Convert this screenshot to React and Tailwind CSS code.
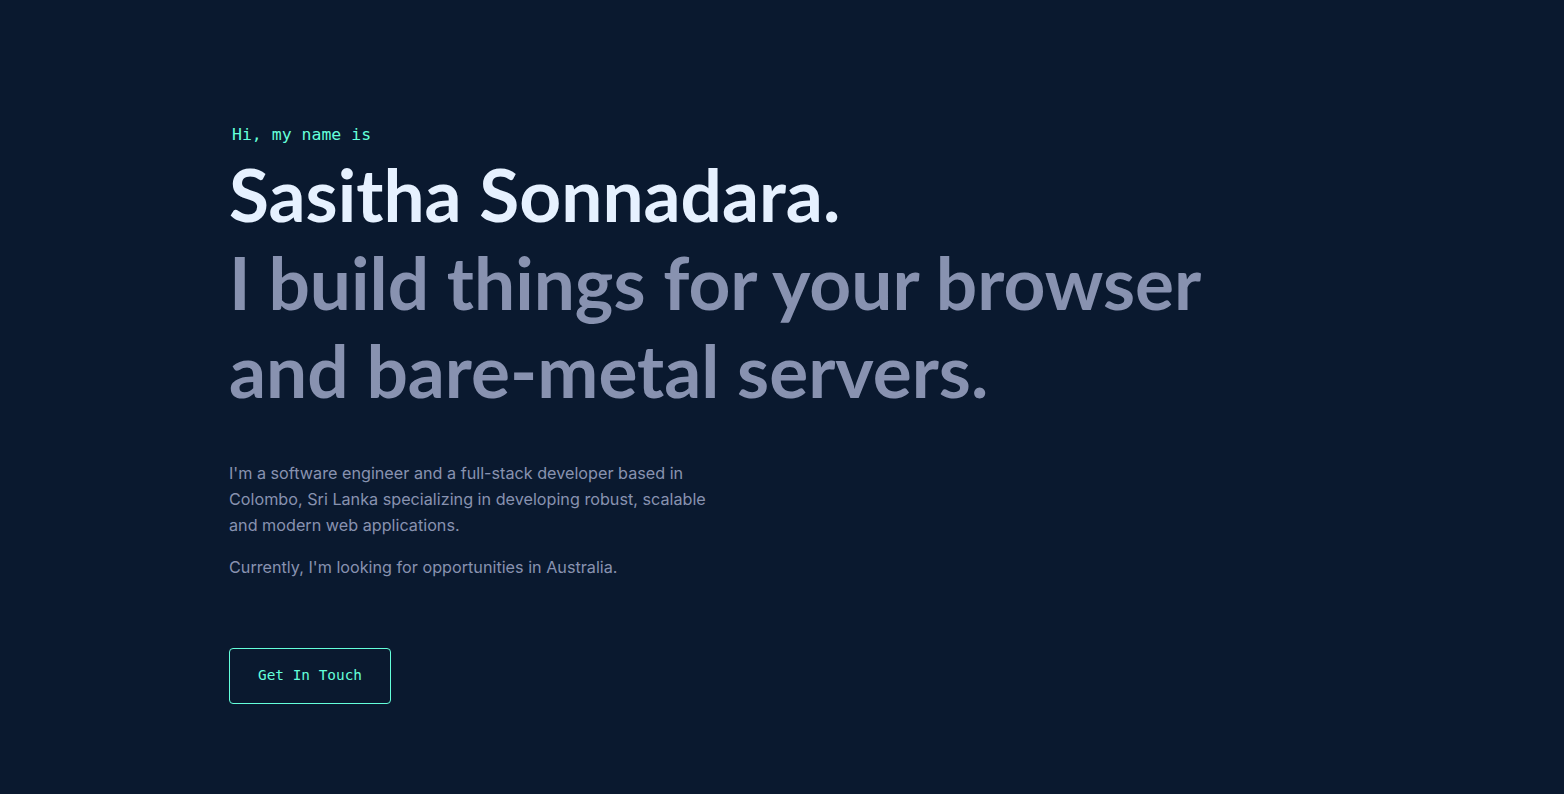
export default function App() {
  return (
    <div className="min-h-screen bg-[#0a192f]">
      <section className="mx-auto flex max-w-[1106px] flex-col items-start pt-[123px] pb-[90px]">
        <h1 className="ml-[3px] font-['DejaVu_Sans_Mono',monospace] text-[16.5px] leading-[24px] text-[#64ffda]">
          Hi, my name is
        </h1>
        <h2 className="mt-[3px] font-['Lato',sans-serif] text-[73px] font-bold leading-[88px] text-[#e6f1ff]">
          Sasitha Sonnadara.
        </h2>
        <h3 className="font-['Lato',sans-serif] text-[73px] font-bold leading-[88px] text-[#8892b0]">
          I build things for your browser
          <br />
          and bare-metal servers.
        </h3>
        <div className="mt-[46px] max-w-[490px] font-['Inter',sans-serif] text-[16.2px] leading-[26px] text-[#8892b0]">
          <p>
            I'm a software engineer and a full-stack developer based in Colombo, Sri Lanka
            specializing in developing robust, scalable and modern web applications.
          </p>
          <p className="mt-[16px]">Currently, I'm looking for opportunities in Australia.</p>
        </div>
        <a
          href="#contact"
          className="mt-[68px] flex h-[56px] items-center rounded-[4px] border border-[#64ffda] px-[28px] font-['DejaVu_Sans_Mono',monospace] text-[14.4px] text-[#64ffda]"
        >
          Get In Touch
        </a>
      </section>
    </div>
  )
}
